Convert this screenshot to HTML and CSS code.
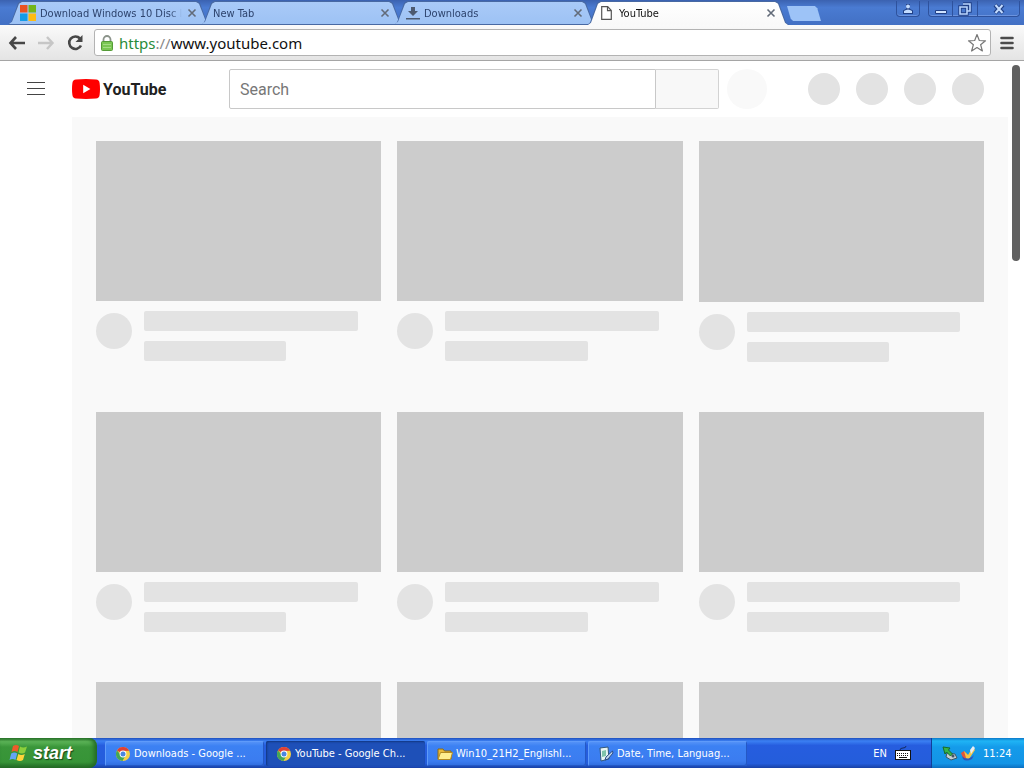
FILE: index.html
```html
<!DOCTYPE html>
<html lang="en">
<head>
<meta charset="utf-8">
<meta name="viewport" content="width=device-width, initial-scale=1">
<title>YouTube</title>
<link rel="stylesheet" href="styles.css">
</head>
<body>
<svg class="defs" width="0" height="0" aria-hidden="true">
  <symbol id="close" viewBox="0 0 10 10"><path d="M1.5 1.5l7 7M8.500 1.500l-7 7" fill="none" stroke="currentColor" stroke-width="1.600"/></symbol>
  <symbol id="chrome" viewBox="0 0 16 16">
    <circle cx="8" cy="8" r="7" fill="#f6cf45"/>
    <path d="M8 8L2 4.400A7 7 0 0 1 14.200 4.800L8 5z" fill="#df4136"/>
    <path d="M2 4.400A7 7 0 0 0 7.500 15L10.500 9.500 8 8 5 8z" fill="#43a657"/>
    <circle cx="8" cy="8" r="3.400" fill="#fff"/><circle cx="8" cy="8" r="2.500" fill="#4b86e0"/>
  </symbol>
</svg>

<header class="browser">
  <div class="titlebar">
    <nav class="tabs" aria-label="Tabs">
      <div class="tab">
        <button class="tab-title"><svg width="16" height="16" viewBox="0 0 16 16"><path fill="#ea5222" d="M0 0h7.500v7.500H0z"/><path fill="#72b51b" d="M8.500 0H16v7.500H8.500z"/><path fill="#159ce8" d="M0 8.500h7.500V16H0z"/><path fill="#fdbb12" d="M8.500 8.500H16V16H8.500z"/></svg><span>Download Windows 10 Disc I</span></button>
        <button class="tab-close" aria-label="Close tab"><svg width="10" height="10"><use href="#close"/></svg></button>
      </div>
      <div class="tab">
        <button class="tab-title"><span>New Tab</span></button>
        <button class="tab-close" aria-label="Close tab"><svg width="10" height="10"><use href="#close"/></svg></button>
      </div>
      <div class="tab">
        <button class="tab-title"><svg width="14" height="14" viewBox="0 0 14 14"><path fill="#4d5a70" d="M5 1h4v4h3L7 10 2 5h3zM0 12h14v1.500H0z"/></svg><span>Downloads</span></button>
        <button class="tab-close" aria-label="Close tab"><svg width="10" height="10"><use href="#close"/></svg></button>
      </div>
      <div class="tab tab-active">
        <button class="tab-title"><svg class="page-icon" width="11" height="14" viewBox="0 0 11 14"><path d="M.7.7h6l3.600 3.800v8.800H.7zM6.500.7v4h3.800" fill="#fff" stroke="#555" stroke-width="1.200"/></svg><span>YouTube</span></button>
        <button class="tab-close" aria-label="Close tab"><svg width="10" height="10"><use href="#close"/></svg></button>
      </div>
      <button class="new-tab" aria-label="New tab"></button>
    </nav>
    <div class="window-controls">
      <button class="control user" aria-label="User"><svg width="12" height="12" viewBox="0 0 12 12"><path d="M4 1h4v4.500H7.200L11 7.500V11H1V7.500l3.800-2H4z" fill="#203f85"/><circle cx="6" cy="3.500" r="2" fill="#c3dcff"/><path d="M2 10V8q4-3 8 0v2z" fill="#c3dcff"/></svg></button>
      <div class="control-group">
        <button class="control" aria-label="Minimize"><svg width="12" height="12" viewBox="0 0 12 12"><path d="M.5 7.500h11v3H.5z" fill="#d0e4ff" stroke="#203f85"/></svg></button>
        <button class="control" aria-label="Restore"><svg width="14" height="14" viewBox="0 0 14 14"><path d="M5 2h7v7H9.500M2 5h7v7H2z" fill="none" stroke="#203f85" stroke-width="3.400"/><path d="M5 2h7v7H9.500M2 5h7v7H2z" fill="none" stroke="#b9d6ff" stroke-width="1.600"/></svg></button>
        <button class="control wide" aria-label="Close"><svg width="12" height="12" viewBox="0 0 12 12"><path d="M2 2l8 8M10 2l-8 8" stroke="#203f85" stroke-width="4"/><path d="M2.500 2l7 8M9.500 2l-7 8" stroke="#c3dcff" stroke-width="2"/></svg></button>
      </div>
    </div>
  </div>
  <div class="toolbar">
    <button class="tool" aria-label="Back"><svg width="18" height="16" viewBox="0 0 18 16"><path d="M8 2L2.500 8 8 14M3 8h14" fill="none" stroke="#474747" stroke-width="2.600"/></svg></button>
    <button class="tool" aria-label="Forward"><svg width="18" height="16" viewBox="0 0 18 16"><path d="M10 2l5.500 6-5.500 6M15 8H1" fill="none" stroke="#c6c6c6" stroke-width="2.400"/></svg></button>
    <button class="tool" aria-label="Reload"><svg width="18" height="18" viewBox="0 0 18 18"><path d="M14 4.500A6.200 6.200 0 1 0 15 11.500" fill="none" stroke="#474747" stroke-width="2.600"/><path d="M16.500 1v7H9.500z" fill="#474747"/></svg></button>
    <div class="address">
      <svg width="12" height="16" viewBox="0 0 12 16"><path d="M2.500 8V4.500a3.500 3.500 0 0 1 7 0V8" fill="none" stroke="#8b938a" stroke-width="1.800"/><rect x=".5" y="6.500" width="11" height="9" rx="1" fill="#7ac653" stroke="#559b38"/><path d="M2 9.500h8M2 12.500h8" stroke="#a5dc85"/></svg>
      <a class="url" href="https://www.youtube.com"><span class="scheme">https</span><span class="slashes">://</span>www.youtube.com</a>
      <button class="star" aria-label="Bookmark"><svg width="20" height="20" viewBox="0 0 20 20"><path d="M10 1.500l2.300 6 6.200.3-4.900 3.900 1.800 6.300-5.400-3.500L4.600 18l1.800-6.300L1.500 7.800l6.200-.3z" fill="#fff" stroke="#777" stroke-width="1.200" stroke-linejoin="round"/></svg></button>
    </div>
    <button class="tool menu" aria-label="Menu"><svg width="14" height="14" viewBox="0 0 14 14"><path d="M1.500 2h11M1.500 7h11M1.500 12h11" stroke="#4b4b4b" stroke-width="2.600" stroke-linecap="round"/></svg></button>
  </div>
</header>

<main class="page">
  <header class="masthead">
    <div class="brand">
      <button class="guide" aria-label="Guide"><svg width="18" height="14" viewBox="0 0 18 14"><path d="M0 .5h18M0 6.500h18M0 12.500h18" stroke="#444" stroke-width="1"/></svg></button>
      <a class="logo" href="#" aria-label="YouTube home"><svg width="28" height="20" viewBox="0 0 28 20"><path d="M4 .4Q14-.4 24 .4 27.200.6 27.600 4 28.400 10 27.600 16 27.200 19.400 24 19.600 14 20.400 4 19.600.8 19.400.4 16-.4 10 .4 4 .8.600 4 .4z" fill="#f00"/><path d="M11.200 5.800v8.400l7.200-4.200z" fill="#fff"/></svg><span>YouTube</span></a>
    </div>
    <form class="search">
      <input type="text" placeholder="Search" aria-label="Search">
      <button type="button" aria-label="Submit search"></button>
    </form>
    <span class="voice"></span>
    <div class="account"><i></i><i></i><i></i><i></i></div>
  </header>
  <section class="feed" aria-label="Loading videos">
    <article class="card"><div class="thumb"></div><div class="meta"><i></i><div class="lines"><b></b><b></b></div></div></article>
    <article class="card"><div class="thumb"></div><div class="meta"><i></i><div class="lines"><b></b><b></b></div></div></article>
    <article class="card"><div class="thumb"></div><div class="meta"><i></i><div class="lines"><b></b><b></b></div></div></article>
    <article class="card"><div class="thumb"></div><div class="meta"><i></i><div class="lines"><b></b><b></b></div></div></article>
    <article class="card"><div class="thumb"></div><div class="meta"><i></i><div class="lines"><b></b><b></b></div></div></article>
    <article class="card"><div class="thumb"></div><div class="meta"><i></i><div class="lines"><b></b><b></b></div></div></article>
    <article class="card"><div class="thumb"></div><div class="meta"><i></i><div class="lines"><b></b><b></b></div></div></article>
    <article class="card"><div class="thumb"></div><div class="meta"><i></i><div class="lines"><b></b><b></b></div></div></article>
    <article class="card"><div class="thumb"></div><div class="meta"><i></i><div class="lines"><b></b><b></b></div></div></article>
  </section>
  <div class="scroll-thumb"></div>
</main>

<footer class="taskbar">
  <button class="start"><svg width="20" height="20" viewBox="0 0 20 20"><path d="M4 3q3-2 6 0L8.500 9q-3-2-6 0z" fill="#ed5b2b"/><path d="M11 3.500q3 2 7 0L16 9.500q-3 2-6.500 0z" fill="#8ccf3c"/><path d="M2.200 10.500q3-2 6 0L6.500 17q-3-2-6 0z" fill="#65a5f5"/><path d="M9.300 11q3 2 6.500 0L14 17q-3 2-6.500 0z" fill="#ffd43a"/></svg><span>start</span></button>
  <div class="tasks">
    <button class="task"><svg width="16" height="16"><use href="#chrome"/></svg><span>Downloads - Google ...</span></button>
    <button class="task task-active"><svg width="16" height="16"><use href="#chrome"/></svg><span>YouTube - Google Ch...</span></button>
    <button class="task"><svg width="16" height="16" viewBox="0 0 16 16"><path d="M1 13V3h5l1.500 2H14v8z" fill="#e8b93a" stroke="#8c6a17"/><path d="M1 13.500L3.500 6.500H15.500l-2 7z" fill="#ffee91" stroke="#b38b24"/></svg><span>Win10_21H2_EnglishI...</span></button>
    <button class="task"><svg width="16" height="16" viewBox="0 0 16 16"><path d="M2 2l8-1 1 12-8 2z" fill="#e9f6f4" stroke="#31577b"/><path d="M4 5l4-1v6l-4 1z" fill="#7fc3aa"/><path d="M14.500 5L8 11l-1 3 3-1 5-6z" fill="#c5d9ed" stroke="#294b85"/></svg><span>Date, Time, Languag...</span></button>
  </div>
  <div class="language"><span>EN</span><svg width="16" height="14" viewBox="0 0 16 14"><path d="M5 4q0-2 3-2t3-2" fill="none" stroke="#132b62"/><rect x=".5" y="4.500" width="15" height="9" fill="#fff" stroke="#111"/><path d="M2 7.500h12M2 9.500h12" stroke="#111" stroke-dasharray="1 1"/><path d="M4 11.500h8" stroke="#111"/></svg></div>
  <div class="tray">
    <svg width="16" height="16" viewBox="0 0 16 16"><path d="M5 8l8 1 2 4-6 2-5-3z" fill="#c5ced2" stroke="#3c5668"/><path d="M1 2l7 1-1.500 2 4 4-2 2-4-4L3 9z" fill="#36b448" stroke="#176b29"/><circle cx="11" cy="11" r="1.500" fill="#42576b"/></svg>
    <svg width="16" height="16" viewBox="0 0 16 16"><path d="M1 8l3-2 4 4-2 4-3-1z" fill="#e1553b"/><path d="M4 6l4 4 5-8 2 3-6 9-3-1z" fill="#f5c646"/><path d="M2 11q5 6 12-1l-2 4q-6 3-9 0z" fill="#3155b8"/><path d="M10 5l3-4 2 2-4 6z" fill="#e8eef5"/></svg>
    <time>11:24</time>
  </div>
</footer>
</body>
</html>
```
FILE: styles.css
```css
* { box-sizing: border-box; }

body {
  margin: 0;
  height: 100vh;
  display: flex;
  flex-direction: column;
  overflow: hidden;
  background: #fff;
  font: 11px "DejaVu Sans Condensed", "Noto Sans", sans-serif;
}

button {
  margin: 0;
  padding: 0;
  border: 0;
  background: none;
  color: inherit;
  font: inherit;
}

svg { display: block; flex: none; }
.defs { position: absolute; }

/* Browser frame */
.titlebar {
  display: flex;
  height: 25px;
  padding: 1px 4px 0 8px;
  background: linear-gradient(#3b62b0, #4a7bd2 30%, #4270c4);
}

.tabs { display: flex; flex: 1; min-width: 0; }

.tab {
  position: relative;
  z-index: 0;
  display: flex;
  align-items: center;
  flex: 0 1 202px;
  min-width: 0;
  margin-right: -9px;
  padding: 0 13px 0 12px;
  color: #2d436d;
}

.tab::before,
.tab::after {
  content: "";
  position: absolute;
  z-index: -1;
  inset: 0;
  background: #4869a3;
  clip-path: polygon(0 100%, 3px 90%, 10px 8%, 13px 0, calc(100% - 13px) 0, calc(100% - 10px) 8%, calc(100% - 3px) 90%, 100% 100%);
}

.tab::after {
  inset: 1px;
  background: linear-gradient(#a9caf8, #9dc2f4);
}

.tab-active { z-index: 1; padding-left: 14px; color: #111; }
.tab-active::after { inset: 1px 1px 0; background: linear-gradient(#fff, #f9f9f9); }

.tab-title {
  display: flex;
  align-items: center;
  gap: 4px;
  flex: 1;
  min-width: 0;
  text-align: left;
}

.tab-title span {
  flex: 1;
  white-space: nowrap;
  mask-image: linear-gradient(to left, transparent, #000 12px);
}

.page-icon { margin-right: 3px; }
.tab-close { padding-left: 8px; color: #626b79; }

.new-tab {
  width: 34px;
  height: 15px;
  margin: 5px 0 0 7px;
  background: #9dc3f7;
  clip-path: polygon(0 0, 82% 0, 89% 15%, 100% 100%, 18% 100%, 11% 85%);
}

.window-controls { display: flex; gap: 8px; }
.control-group { display: flex; }

.control {
  display: flex;
  justify-content: center;
  align-items: center;
  width: 25px;
  height: 16px;
  border: 1px solid #2e529d;
  border-top: 0;
  box-shadow: inset 0 -1px #6b93de;
}

.control.user { width: 24px; border-radius: 0 0 4px 4px; }
.control-group .control + .control { border-left: 0; }
.control-group .control:first-child { border-radius: 0 0 0 4px; }
.control.wide { width: 42px; border-radius: 0 0 4px 0; }

.toolbar {
  display: flex;
  align-items: center;
  gap: 11px;
  height: 36px;
  padding: 0 10px 0 8px;
  background: linear-gradient(#fafafa, #e4e4e4);
  border-bottom: 1px solid #a5a5a5;
}

.toolbar .menu { margin-left: -2px; }

.address {
  display: flex;
  align-items: center;
  gap: 6px;
  flex: 1;
  height: 27px;
  margin-left: -1px;
  padding: 0 3px 0 6px;
  border: 1px solid #b3b3b3;
  border-radius: 3px;
  background: #fff;
}

.url {
  flex: 1;
  color: #111;
  font: 15px "Noto Sans", sans-serif;
  text-decoration: none;
}

.scheme { color: #288c3a; }
.slashes { color: #888; }

/* Page */
.page {
  position: relative;
  flex: 1;
  min-height: 0;
  overflow: hidden;
}

.masthead {
  display: flex;
  align-items: center;
  height: 56px;
  padding-right: 40px;
}

.brand {
  display: flex;
  align-items: center;
  gap: 27px;
  width: 229px;
  padding-left: 27px;
}

.logo {
  display: flex;
  align-items: center;
  gap: 3px;
  color: #212121;
  font: bold 16px Roboto, sans-serif;
  text-decoration: none;
}

.search { display: flex; flex: 1; height: 40px; min-width: 0; }

.search input {
  flex: 1;
  min-width: 0;
  padding: 0 10px;
  border: 1px solid #c8c8c8;
  border-radius: 2px 0 0 2px;
  background: #fff;
  font: 16px Roboto, sans-serif;
}

.search input::placeholder { color: #777; opacity: 1; }

.search button {
  width: 63px;
  border: 1px solid #d3d3d3;
  border-left: 0;
  border-radius: 0 2px 2px 0;
  background: #f8f8f8;
}

.voice {
  width: 40px;
  height: 40px;
  margin: 0 41px 0 8px;
  border-radius: 50%;
  background: #f9f9f9;
}

.account { display: flex; gap: 16px; }
.account i { width: 32px; height: 32px; border-radius: 50%; background: #e3e3e3; }

.feed {
  display: grid;
  grid-template-columns: repeat(3, 1fr);
  column-gap: 16px;
  row-gap: 50px;
  margin: 0 16px 0 72px;
  padding: 24px;
  background: #f9f9f9;
}

.thumb { aspect-ratio: 16 / 9; background: #ccc; }
.meta { display: flex; gap: 12px; padding-top: 10px; }
.meta i { width: 36px; height: 36px; margin-top: 2px; border-radius: 50%; background: #e3e3e3; }
.lines { display: grid; gap: 10px; flex: 1; }
.lines b { width: 90%; height: 20px; border-radius: 2px; background: #e3e3e3; }
.lines b + b { width: 60%; }

.scroll-thumb {
  position: absolute;
  top: 4px;
  right: 4px;
  width: 8px;
  height: 29%;
  border-radius: 4px;
  background: #606060;
}

/* Taskbar */
.taskbar {
  display: flex;
  height: 30px;
  background: linear-gradient(#1f4fbd, #3b80f3 10%, #265ddf 25%, #245ddb 85%, #1941a5);
  color: #fff;
}

.start {
  display: flex;
  align-items: center;
  gap: 4px;
  width: 97px;
  padding-left: 9px;
  border-radius: 0 8px 8px 0;
  background: linear-gradient(#2d7a2f, #5cb457 12%, #3a963a 30%, #379437 80%, #236a25);
  box-shadow: inset -3px 0 4px #236a25;
  font: italic bold 18px "Liberation Sans", sans-serif;
  text-shadow: 1px 1px 1px #174519;
}

.tasks { display: flex; gap: 2px; flex: 1; min-width: 0; padding: 3px 0 2px 8px; }

.task {
  display: flex;
  align-items: center;
  gap: 3px;
  flex: 0 1 159px;
  min-width: 0;
  padding: 0 10px;
  border-radius: 2px;
  background: linear-gradient(#5a96f8, #3c81f3 20%, #3b7cf0 80%, #2f6bdc);
  box-shadow: inset 1px 1px #5f9bfa, inset -1px -1px #2458c5;
  white-space: nowrap;
}

.task span { overflow: hidden; }

.task-active {
  background: #1e50b8;
  box-shadow: inset 1px 1px 2px #123680;
}

.language { display: flex; align-items: center; gap: 8px; padding-right: 20px; }

.tray {
  display: flex;
  align-items: center;
  gap: 2px;
  width: 93px;
  padding-left: 10px;
  border-left: 1px solid #113f98;
  background: linear-gradient(#0c78c8, #1fb4f5 10%, #149bea 30%, #1394e6 85%, #0c6fc0);
}

.tray time { margin-left: 5px; }
```
